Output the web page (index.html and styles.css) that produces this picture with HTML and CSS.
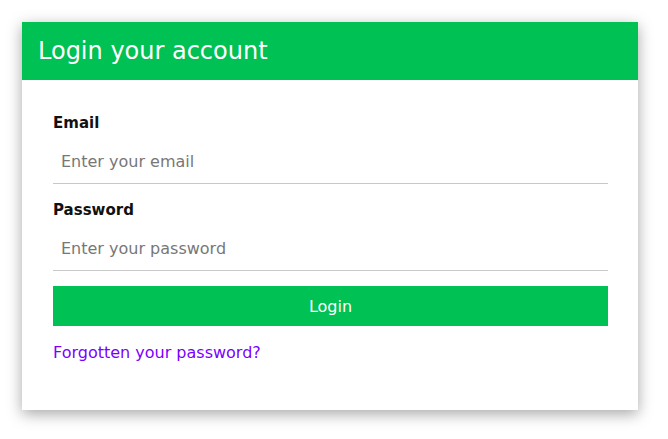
FILE: index.html
```html
<!DOCTYPE html>
<html>
<head>
<meta charset="utf-8">
<link rel="stylesheet" href="styles.css">
</head>
<body>
<div class="card">
  <div class="card-header">Login your account</div>
  <form class="card-body">
    <label class="label" for="email">Email</label>
    <input class="field" id="email" type="email" placeholder="Enter your email">
    <label class="label" for="password">Password</label>
    <input class="field" id="password" type="password" placeholder="Enter your password">
    <button class="btn" type="button">Login</button>
    <a class="link" href="#">Forgotten your password?</a>
  </form>
</div>
</body>
</html>
```
FILE: styles.css
```css
html, body {
  margin: 0;
  padding: 0;
  background: #fff;
}
body {
  min-height: 439px;
  box-sizing: border-box;
  padding: 22px 30px 0 22px;
  font-family: "DejaVu Sans", sans-serif;
}
.card {
  width: 616px;
  background: #fff;
  box-shadow: 0 4px 14px rgba(0, 0, 0, 0.35);
}
.card-header {
  height: 58px;
  background: #00c153;
  color: #fff;
  font-size: 24px;
  line-height: 58px;
  padding-left: 16px;
}
.card-body {
  display: flex;
  flex-direction: column;
  padding: 32px 30px 46px 31px;
  margin: 0;
}
.label {
  font-size: 15px;
  font-weight: bold;
  color: #111;
  line-height: 22px;
}
.field {
  height: 50px;
  box-sizing: border-box;
  border: none;
  border-bottom: 1px solid #c8c8c8;
  padding: 6px 8px 0;
  font-family: inherit;
  font-size: 16px;
  outline: none;
  margin-bottom: 15px;
  background: transparent;
}
.field::placeholder {
  color: #777;
}
.btn {
  height: 40px;
  border: none;
  background: #00c153;
  color: #fff;
  font-family: inherit;
  font-size: 16px;
}
.link {
  margin-top: 16px;
  color: #7a00ff;
  text-decoration: none;
  font-size: 16px;
  line-height: 22px;
}
```
